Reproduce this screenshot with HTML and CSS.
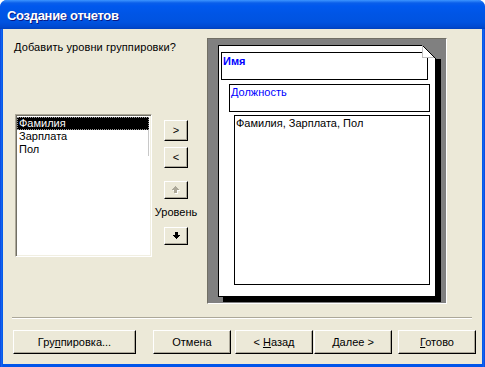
FILE: index.html
```html
<!DOCTYPE html>
<html lang="ru">
<head>
    <meta charset="UTF-8">
    <title>Создание отчетов</title>
    <link rel="stylesheet" href="styles.css">
</head>
<body>
    <div class="window">
        <div class="titlebar">Создание отчетов</div>

        <div class="client">
            <div class="main">
                <div class="left">
                    <div class="prompt">Добавить уровни группировки?</div>

                    <div class="picker">
                        <div class="listbox">
                            <div class="item selected">Фамилия</div>
                            <div class="item">Зарплата</div>
                            <div class="item">Пол</div>
                        </div>

                        <div class="move-col">
                            <div class="btn small">&gt;</div>
                            <div class="btn small gap-6">&lt;</div>
                            <div class="btn small arrow gap-13">
                                <svg width="9" height="8" viewBox="0 0 9 8" shape-rendering="crispEdges">
                                    <g fill="#fff" transform="translate(1,1)">
                                        <rect x="3" y="0" width="1" height="1"/>
                                        <rect x="2" y="1" width="3" height="1"/>
                                        <rect x="1" y="2" width="5" height="1"/>
                                        <rect x="0" y="3" width="7" height="1"/>
                                        <rect x="2" y="4" width="3" height="3"/>
                                    </g>
                                    <g fill="#aca899">
                                        <rect x="3" y="0" width="1" height="1"/>
                                        <rect x="2" y="1" width="3" height="1"/>
                                        <rect x="1" y="2" width="5" height="1"/>
                                        <rect x="0" y="3" width="7" height="1"/>
                                        <rect x="2" y="4" width="3" height="3"/>
                                    </g>
                                </svg>
                            </div>
                            <div class="level-label">Уровень</div>
                            <div class="btn small arrow gap-8">
                                <svg width="7" height="7" viewBox="0 0 7 7" shape-rendering="crispEdges">
                                    <g fill="#000">
                                        <rect x="2" y="0" width="3" height="3"/>
                                        <rect x="0" y="3" width="7" height="1"/>
                                        <rect x="1" y="4" width="5" height="1"/>
                                        <rect x="2" y="5" width="3" height="1"/>
                                        <rect x="3" y="6" width="1" height="1"/>
                                    </g>
                                </svg>
                            </div>
                        </div>
                    </div>
                </div>

                <div class="preview">
                    <div class="page">
                        <div class="band band-name">Имя</div>
                        <div class="band band-post">Должность</div>
                        <div class="band band-detail">Фамилия, Зарплата, Пол</div>

                        <svg class="dog-ear" width="19" height="14" viewBox="0 0 19 14" shape-rendering="crispEdges">
                            <rect x="14" y="0" width="5" height="14" fill="#808080"/>
                            <polygon points="0,0 14,0 14,14" fill="#808080"/>
                            <polygon points="0,0 13,13 0,13" fill="#fff"/>
                            <rect x="0" y="1" width="1" height="12" fill="#c0c0c0"/>
                            <rect x="1" y="12" width="12" height="1" fill="#c0c0c0"/>
                            <line x1="0.5" y1="0.5" x2="13.5" y2="13.5" stroke="#000" stroke-width="1" shape-rendering="auto"/>
                            <rect x="13" y="13" width="1" height="1" fill="#000"/>
                        </svg>
                    </div>
                </div>
            </div>

            <div class="separator"></div>

            <div class="buttons">
                <div class="btn wide"><span>Гру<u>п</u>пировка...</span></div>
                <div class="btn cancel"><span>Отмена</span></div>
                <div class="btn back"><span>&lt; <u>Н</u>азад</span></div>
                <div class="btn next"><span><u>Д</u>алее &gt;</span></div>
                <div class="btn finish"><span><u>Г</u>отово</span></div>
            </div>
        </div>
    </div>
</body>
</html>
```

FILE: styles.css
```css
body {
    margin: 0;
    width: 485px;
    height: 367px;
    overflow: hidden;
    background: #fff;
    font-family: 'Liberation Sans', Tahoma, Arial, sans-serif;
    font-size: 11px;
    color: #000;
}

.window {
    width: 485px;
    height: 367px;
    display: flex;
    flex-direction: column;
    background: linear-gradient(90deg, #0831d9 0, #166aee 1px, #0055ea 3px, #0055ea 482px, #166aee 484px, #0831d9 485px);
    border-radius: 7px 7px 0 0;
    box-sizing: border-box;
}

.titlebar {
    height: 29px;
    box-sizing: border-box;
    padding: 8px 0 0 7px;
    line-height: 15px;
    font-size: 13px;
    font-weight: bold;
    letter-spacing: -0.3px;
    color: #fff;
    text-shadow: 1px 1px 0 #0a1883;
    border-radius: 7px 7px 0 0;
    background: linear-gradient(#3d95ff 0, #0a5eea 3px, #0058ee 6px, #0055e5 14px, #0053e0 22px, #0049d0 27px, #0040bd 29px);
}

.client {
    flex: 1;
    margin: 0 3px 3px;
    background: #ece9d8;
    display: flex;
    flex-direction: column;
}

/* upper part: prompt, list and preview */

.main {
    height: 288px;
    display: flex;
}

.left {
    width: 204px;
    box-sizing: border-box;
    padding: 12px 0 0 11px;
}

.prompt {
    line-height: 13px;
    white-space: nowrap;
    letter-spacing: 0.1px;
}

.picker {
    display: flex;
    margin: 60px 0 0 1px;
}

.listbox {
    width: 137px;
    height: 143px;
    box-sizing: border-box;
    background: #fff;
    border-top: 1px solid #aca899;
    border-left: 1px solid #aca899;
    border-right: 1px solid #fff;
    border-bottom: 1px solid #fff;
    box-shadow: inset 1px 1px 0 #716f64, inset -1px -1px 0 #f1efe2;
    padding: 2px 1px 0 1px;
}

.item {
    height: 13px;
    line-height: 13px;
    padding-left: 2px;
    margin-right: 1px;
    border-right: 1px solid #c8c8c8;
    white-space: nowrap;
}

.item.selected {
    background: #000;
    color: #fff;
    border-right-color: #000;
    outline: 1px dotted #9a9a9a;
    outline-offset: -1px;
}

.move-col {
    width: 44px;
    margin-left: 2px;
    padding-top: 6px;
    display: flex;
    flex-direction: column;
    align-items: center;
}

.level-label {
    margin-top: 7px;
    line-height: 13px;
    white-space: nowrap;
}

.gap-6 { margin-top: 6px; }
.gap-8 { margin-top: 8px; }
.gap-13 { margin-top: 13px; }

/* classic 3d push button */

.btn {
    box-sizing: border-box;
    display: flex;
    align-items: center;
    justify-content: center;
    background: #ece9d8;
    border-top: 1px solid #fff;
    border-left: 1px solid #fff;
    border-right: 1px solid #000;
    border-bottom: 1px solid #000;
    box-shadow: inset -1px -1px 0 #aca899;
    white-space: nowrap;
}

.btn u {
    text-decoration-thickness: 1px;
    text-underline-offset: 1px;
}

.btn.small {
    width: 24px;
    height: 21px;
    padding-bottom: 1px;
}

.btn.small.arrow {
    height: 18px;
}

/* report preview */

.preview {
    width: 240px;
    height: 266px;
    margin-top: 9px;
    box-sizing: border-box;
    background: #808080;
    border-top: 1px solid #716f64;
    border-left: 1px solid #716f64;
    border-right: 1px solid #fff;
    border-bottom: 1px solid #fff;
    padding: 6px 0 0 10px;
}

.page {
    position: relative;
    width: 218px;
    height: 252px;
    box-sizing: border-box;
    background: #fff;
    border: 1px solid #000;
    box-shadow: 5px 5px 0 #000;
    padding: 6px 0 0 2px;
}

.dog-ear {
    position: absolute;
    top: -1px;
    right: -6px;
}

.band {
    box-sizing: border-box;
    border: 1px solid #000;
    line-height: 13px;
    white-space: nowrap;
}

.band-name {
    width: 207px;
    height: 28px;
    padding: 2px 1px;
    color: #0000ff;
    font-weight: bold;
}

.band-post {
    width: 201px;
    height: 28px;
    margin: 4px 0 0 8px;
    padding: 1px;
    color: #0000ff;
}

.band-detail {
    width: 196px;
    height: 170px;
    margin: 3px 0 0 13px;
    padding: 1px;
}

/* bottom bar */

.separator {
    height: 0;
    margin: 0 10px 0 9px;
    border-top: 1px solid #aca899;
    border-bottom: 1px solid #fff;
}

.buttons {
    display: flex;
    margin-top: 11px;
    padding-left: 10px;
}

.buttons .btn {
    height: 24px;
    width: 78px;
}

.buttons .wide { width: 123px; }
.buttons .cancel { margin-left: 17px; }
.buttons .back { margin-left: 4px; }
.buttons .next { margin-left: 1px; }
.buttons .finish { margin-left: 6px; }
```
